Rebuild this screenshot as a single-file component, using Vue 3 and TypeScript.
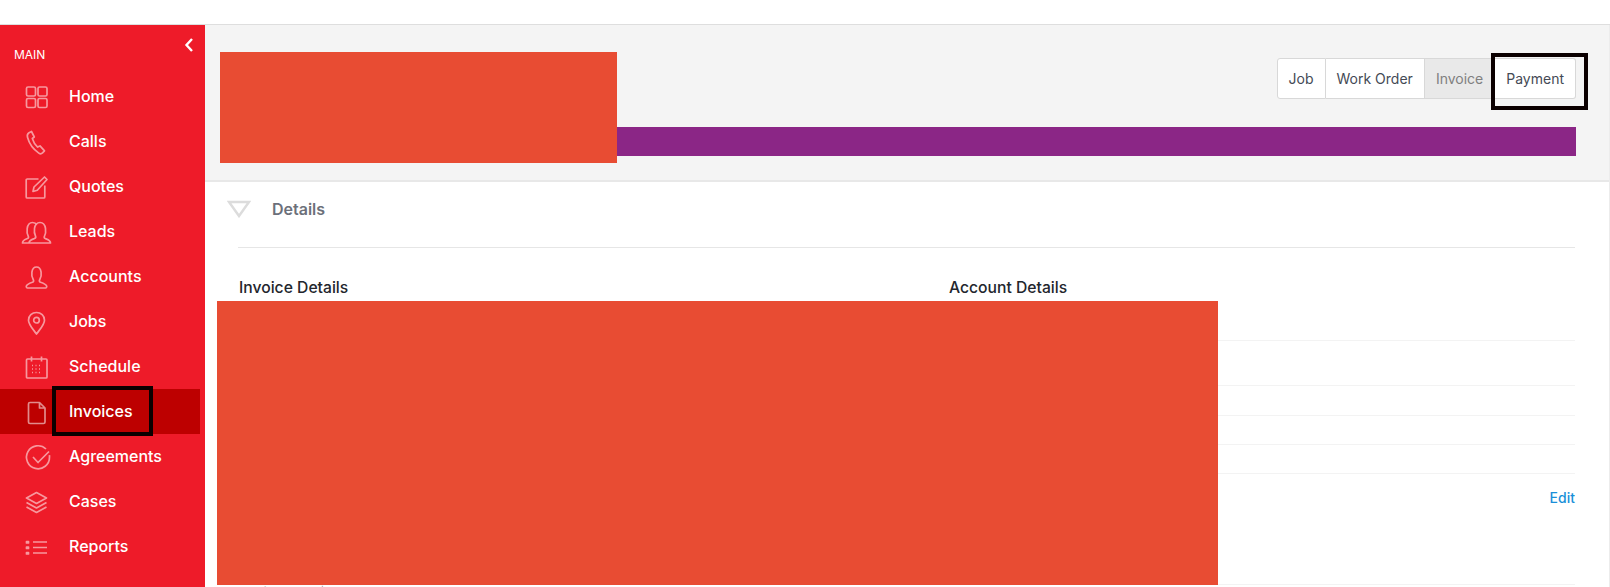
<script setup lang="ts">
interface NavItem {
  label: string
  d: string
  active?: boolean
}

const nav: NavItem[] = [
  { label: 'Home', d: 'M4 3h6a1.500 1.500 0 0 1 1.500 1.500v6a1.500 1.500 0 0 1-1.500 1.500H4a1.500 1.500 0 0 1-1.500-1.500v-6A1.500 1.500 0 0 1 4 3zM15.500 3h6A1.500 1.500 0 0 1 23 4.500v6a1.500 1.500 0 0 1-1.500 1.500h-6a1.500 1.500 0 0 1-1.500-1.500v-6A1.500 1.500 0 0 1 15.500 3zM4 14.500h6a1.500 1.500 0 0 1 1.500 1.500v6a1.500 1.500 0 0 1-1.500 1.500H4A1.500 1.500 0 0 1 2.500 22v-6A1.500 1.500 0 0 1 4 14.500zM15.500 14.500h6A1.500 1.500 0 0 1 23 16v6a1.500 1.500 0 0 1-1.500 1.500h-6A1.500 1.500 0 0 1 14 22v-6a1.500 1.500 0 0 1 1.500-1.500z' },
  { label: 'Calls', d: 'M7.500 2.500 5 3.800C3.300 4.800 3 6.300 3.500 8.200c1.400 5.300 5.500 11.800 11.300 15.900 1.400 1 2.700.8 3.700-.2l2-2-4.500-5-2.400 1.200C11 15.800 9.200 12.500 8.300 9.500l2-1.500z' },
  { label: 'Quotes', d: 'M14.500 5H3.200a1 1 0 0 0-1 1v17a1 1 0 0 0 1 1h16.600a1 1 0 0 0 1-1V11.500M10 13l-1 4.500 4.300-1.300L23 5.500 20.500 3z' },
  { label: 'Leads', d: 'M6.500 24H-1.500c0-2.800 2.500-3.500 5-4.500 1-.4 1.300-1.200.8-2.200C3 14.800 2.800 12 3.200 9.500 3.700 6 5.700 3.500 8.500 3.500c2 0 3.500 1 4.400 2.500M5 24h21.500c0-2.800-2.800-3.500-5.300-4.500-1-.4-1.200-1.200-.8-2.200 1.300-2.500 1.500-5.300 1.100-7.800C21 6 19 3.500 16 3.500s-5 2.500-5.500 6c-.4 2.500-.2 5.300 1.100 7.800.4 1-.2 1.800-1.100 2.200C8 20.500 5 21.200 5 24z' },
  { label: 'Accounts', d: 'M3.500 24h18a1.500 1.500 0 0 0 1.200-1.800c-.5-2-2.800-2.900-6.200-4-1.200-.4-1.400-1.400-.8-2.400 1.500-2.500 1.800-5.300 1.400-7.700C16.600 4.700 14.800 3 12.500 3S8.400 4.700 7.900 8.100c-.4 2.400-.1 5.200 1.400 7.700.6 1 .4 2-.8 2.400-3.400 1.100-5.700 2-6.200 4A1.500 1.500 0 0 0 3.500 24z' },
  { label: 'Jobs', d: 'M12.500 25C8.500 19.500 4.500 15.500 4.500 11.200 4.500 6.800 8 3.500 12.500 3.500s8 3.300 8 7.700c0 4.300-4 8.300-8 13.800zM12.500 8.400a2.800 2.800 0 1 0 0 5.600 2.800 2.800 0 0 0 0-5.600z' },
  { label: 'Schedule', d: 'M3.500 5h18.500a1 1 0 0 1 1 1v17a1 1 0 0 1-1 1H3.500a1 1 0 0 1-1-1V6a1 1 0 0 1 1-1zM7.500 2.500v5M17.500 2.500v5M8 11.500h1M11.500 11.500h1M15 11.500h1M8 15h1M11.500 15h1M15 15h1M8 18.500h1M11.500 18.500h1M15 18.500h1' },
  { label: 'Invoices', active: true, d: 'M6 3.500h9.500L21 9v14a1.500 1.500 0 0 1-1.500 1.500H6A1.500 1.500 0 0 1 4.500 23V5A1.500 1.500 0 0 1 6 3.500zM15.500 3.500V9H21' },
  { label: 'Agreements', d: 'M22 5A11.500 11.500 0 1 0 25.500 13c0-.6 0-1.200-.1-1.800M9 13l5 5.500L25 7.500' },
  { label: 'Cases', d: 'M12.500 3.500 2.500 9l10 5.500 10-5.500zM2.500 13.500l10 5.500 10-5.500M2.500 18l10 5.500 10-5.500' },
  { label: 'Reports', d: 'M9 8h14M9 13.500h14M9 19h14M2.500 7.500h2v1.500h-2zM2.500 13h2v1.500h-2zM2.500 18.500h2V20h-2z' }
]

const tabs = ['Job', 'Work Order', 'Invoice', 'Payment']
const rowHeights = [63, 45, 30, 29, 29, 111]
</script>

<template>
  <div class="page">
    <div class="top"></div>
    <div class="shell">
      <aside class="side">
        <svg class="collapse" viewBox="0 0 10 16"><path d="M8 2 2.500 8 8 14" /></svg>
        <div class="main-label">MAIN</div>
        <nav class="nav">
          <a v-for="item in nav" :key="item.label" class="item" :class="{ active: item.active }">
            <svg class="icon" viewBox="0 0 24 26"><path :d="item.d" /></svg>
            <span class="item-text">{{ item.label }}</span>
          </a>
        </nav>
        <div class="mark mark-nav"></div>
      </aside>

      <main class="content">
        <header class="head">
          <div class="tabs">
            <button
              v-for="t in tabs"
              :key="t"
              class="tab"
              :class="{ current: t === 'Invoice' }"
            >{{ t }}</button>
          </div>
          <div class="bar"></div>
          <div class="cover cover-title"></div>
          <div class="mark mark-tab"></div>
        </header>

        <section class="details">
          <div class="details-head">
            <svg class="tri" viewBox="0 0 24 18"><path d="M2 2h20L12 16z" /></svg>
            <span>Details</span>
          </div>
          <div class="body">
            <div class="cols">
              <h3>Invoice Details</h3>
              <h3>Account Details</h3>
            </div>
            <div
              v-for="(h, i) in rowHeights"
              :key="i"
              class="row"
              :style="{ height: h + 'px' }"
            >
              <a v-if="i === 5" class="edit">Edit</a>
            </div>
            <div class="total">Invoice Total: $1,234.00</div>
          </div>
          <div class="cover cover-body"></div>
        </section>
      </main>
    </div>
  </div>
</template>

<style>
html, body { margin: 0; background: #fff; overflow: hidden; }
</style>

<style scoped>
.page {
  width: 1610px;
  height: 587px;
  overflow: hidden;
  font-family: Inter, "Liberation Sans", sans-serif;
  position: relative;
}
.top {
  height: 24px;
  border-bottom: 1px solid #dedede;
}
.shell {
  display: flex;
  height: 562px;
}
.side {
  width: 205px;
  flex: none;
  background: #ee1b29;
  position: relative;
  color: #fff;
}
.collapse {
  position: absolute;
  left: 184px;
  top: 12px;
  width: 10px;
  height: 16px;
  fill: none;
  stroke: #fff;
  stroke-width: 2.400;
}
.main-label {
  padding: 23px 0 0 14px;
  height: 26px;
  font-size: 12px;
  font-weight: 400;
  line-height: 14px;
}
.item {
  display: flex;
  align-items: center;
  height: 45px;
  width: 200px;
  font-size: 16px;
  font-weight: 500;
}
.item-text { margin-top: -1px; }
.item.active { background: #bd0000; }
.icon {
  width: 24px;
  height: 26px;
  margin-left: 24px;
  margin-right: 21px;
  overflow: visible;
  fill: none;
  stroke: #fff;
  stroke-opacity: 0.55;
  stroke-width: 1.700;
  stroke-linejoin: round;
  flex: none;
}
.mark {
  position: absolute;
  border: 4px solid #0b0000;
  box-sizing: border-box;
  pointer-events: none;
}
.mark-nav {
  left: 52px;
  top: 361px;
  width: 101px;
  height: 50px;
}
.content {
  flex: 1;
  min-width: 0;
  border-right: 1px solid #ececec;
  position: relative;
}
.head {
  height: 157px;
  box-sizing: border-box;
  background: #f4f4f4;
  border-bottom: 2px solid #e8e8e8;
  padding: 33px 33px 0 15px;
  position: relative;
}
.tabs {
  display: flex;
  justify-content: flex-end;
}
.tab {
  height: 41px;
  box-sizing: border-box;
  padding: 0 11px;
  background: #fff;
  border: 1px solid #d8d8d8;
  border-left-width: 0;
  font: 400 14px Inter, "Liberation Sans", sans-serif;
  color: #444a55;
}
.tab:first-child {
  border-left-width: 1px;
  border-radius: 3px 0 0 3px;
}
.tab:last-child { border-radius: 0 3px 3px 0; }
.tab.current {
  background: #e9e9e9;
  color: #808080;
}
.bar {
  height: 29px;
  margin-top: 28px;
  background: #8b2686;
}
.cover {
  position: absolute;
  background: #e84c33;
}
.cover-title {
  left: 15px;
  top: 27px;
  width: 397px;
  height: 111px;
}
.mark-tab {
  left: 1286px;
  top: 28px;
  width: 97px;
  height: 57px;
}
.details { position: relative; }
.details-head {
  display: flex;
  align-items: center;
  box-sizing: border-box;
  height: 65px;
  padding: 0 0 11px 22px;
  font-size: 16px;
  font-weight: 600;
  color: #6c707a;
}
.tri {
  width: 24px;
  height: 18px;
  margin-right: 21px;
  fill: none;
  stroke: #dcdcdc;
  stroke-width: 2.500;
}
.body { padding: 0 34px 0 33px; }
.cols {
  display: flex;
  border-top: 1px solid #e6e6e6;
  padding-top: 30px;
  height: 0;
}
.cols h3 {
  margin: 0;
  width: 711px;
  box-sizing: border-box;
  flex: none;
  font-size: 15.700px;
  font-weight: 500;
  line-height: 20px;
  color: #23262d;
}
.cols h3:first-child { padding-left: 1px; }
.row {
  box-sizing: border-box;
  border-bottom: 1px solid #f3f3f3;
  display: flex;
  justify-content: flex-end;
  padding-top: 15px;
}
.edit {
  color: #1a8fd8;
  font-size: 14px;
  font-weight: 500;
  line-height: 17px;
}
.total {
  font-size: 12px;
  line-height: 14px;
  color: #888;
  margin: 0 0 0 2px;
}
.cover-body {
  left: 12px;
  top: 119px;
  width: 1001px;
  height: 284px;
}
</style>
